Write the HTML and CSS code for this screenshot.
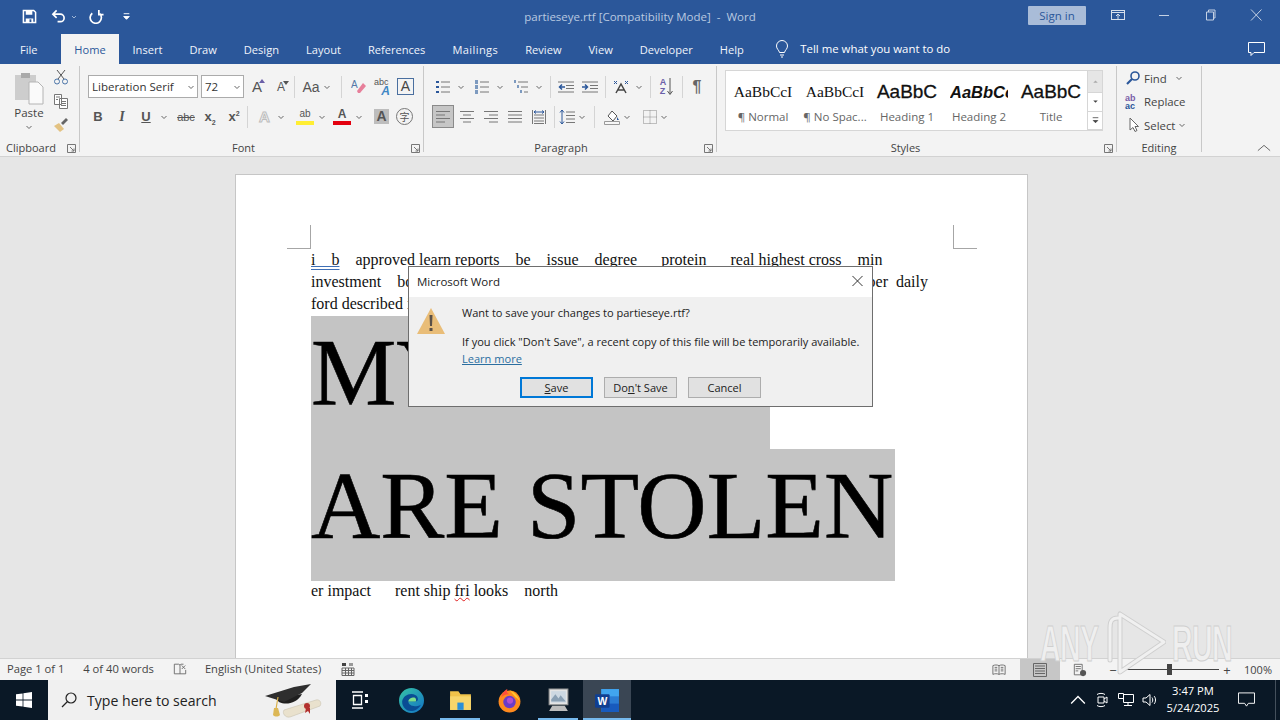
FILE: index.html
```html
<!DOCTYPE html>
<html lang="en">
<head>
<meta charset="utf-8">
<title>partieseye.rtf - Word</title>
<link rel="stylesheet" href="styles.css">
</head>
<body>
<svg class="defs" width="0" height="0">
  <symbol id="chev" viewBox="0 0 8 8"><path d="M1.500 3l2.500 2.500L6.500 3" fill="none" stroke="#666" stroke-width="1"/></symbol>
  <symbol id="launch" viewBox="0 0 9 9"><path d="M.5.500h8v8h-8zM3 3l4 4M7 4.500V7H4.500" fill="none" stroke="#777"/></symbol>
  <symbol id="al-l" viewBox="0 0 16 16"><path d="M1 2.500h14M1 6h9M1 9.500h14M1 13h9" fill="none" stroke="#777"/></symbol>
  <symbol id="al-c" viewBox="0 0 16 16"><path d="M1 2.500h14M4 6h8M1 9.500h14M4 13h8" fill="none" stroke="#777"/></symbol>
  <symbol id="al-r" viewBox="0 0 16 16"><path d="M1 2.500h14M6 6h9M1 9.500h14M6 13h9" fill="none" stroke="#777"/></symbol>
  <symbol id="al-j" viewBox="0 0 16 16"><path d="M1 2.500h14M1 6h14M1 9.500h14M1 13h14" fill="none" stroke="#777"/></symbol>
</svg>

<div class="app">
  <header class="titlebar">
    <div class="qat">
      <svg class="q" viewBox="0 0 16 16"><path d="M1.500 1.500h11l2 2v11h-13z" fill="none" stroke="#fff" stroke-width="1.600"/><path d="M4 2h7v4H4zM4 10h8v4H4z" fill="#fff"/><path d="M8 11h2v3H8z" fill="#2b579a"/></svg>
      <svg class="q undo" viewBox="0 0 16 16"><path d="M6 1.500L2 5.500l4 4M2.500 5.500H10a4 4 0 0 1 0 8H7" fill="none" stroke="#fff" stroke-width="1.800"/></svg>
      <svg class="mini" viewBox="0 0 8 8"><path d="M2 3l2 2 2-2" fill="none" stroke="#9fb6d6"/></svg>
      <svg class="q redo" viewBox="0 0 16 16"><path d="M4 3.500a6 6 0 1 0 8 .5M11 0v5h5" fill="none" stroke="#fff" stroke-width="1.800" transform="translate(-.5 1)"/></svg>
      <svg class="q more" viewBox="0 0 16 16"><path d="M5 5h6M5 8h6l-3 3z" fill="#fff" stroke="#fff"/></svg>
    </div>
    <div class="doc-title">partieseye.rtf [Compatibility Mode]&nbsp; -&nbsp; Word</div>
    <div class="winctl">
      <button class="signin">Sign in</button>
      <svg class="w opts" viewBox="0 0 14 12"><rect x=".5" y="1.500" width="13" height="9" fill="none" stroke="#d5dfec"/><path d="M.5 3.500h13M7 10V5M5 7l2-2 2 2" fill="none" stroke="#d5dfec"/></svg>
      <svg class="w" viewBox="0 0 14 12"><path d="M2 6.500h10" stroke="#c4d1e4"/></svg>
      <svg class="w" viewBox="0 0 14 12"><path d="M3.500 3h7v8h-7zM5.500 3V1h6.500v8h-1.500" fill="none" stroke="#c4d1e4"/></svg>
      <svg class="w" viewBox="0 0 14 12"><path d="M2 .5l10.500 11M12.500.5L2 11.500" fill="none" stroke="#c4d1e4"/></svg>
    </div>
  </header>

  <nav class="tabs">
    <span class="tab file">File</span>
    <span class="tab active">Home</span>
    <span class="tab">Insert</span>
    <span class="tab">Draw</span>
    <span class="tab">Design</span>
    <span class="tab">Layout</span>
    <span class="tab">References</span>
    <span class="tab mail">Mailings</span>
    <span class="tab">Review</span>
    <span class="tab">View</span>
    <span class="tab">Developer</span>
    <span class="tab">Help</span>
    <svg class="bulb" viewBox="0 0 14 18"><path d="M4.500 12.500C4 10 1.500 9 1.500 6a5.500 5.500 0 0 1 11 0c0 3-2.500 4-3 6.500zM5 15h4M6 17h2" fill="none" stroke="#fff"/></svg>
    <span class="tellme">Tell me what you want to do</span>
    <svg class="comment" viewBox="0 0 18 16"><path d="M.5 1.500h16v10H6l-3 3v-3H.5z" fill="none" stroke="#fff"/></svg>
  </nav>

  <section class="ribbon">
    <div class="group g-clip">
      <div class="g-body clip">
        <div class="paste">
          <svg class="paste-i" viewBox="0 0 30 34"><path d="M1 4h21v25H1z" fill="#cdcdcd"/><path d="M7 2h9v5H7z" fill="#aaa"/><path d="M15 11h9l5 5v17H15z" fill="#fafafa" stroke="#b4b4b4"/></svg>
          <span class="paste-t">Paste</span>
          <svg class="ch" ><use href="#chev"/></svg>
        </div>
        <div class="clip-tools">
          <svg class="ic" viewBox="0 0 16 16"><path d="M4 1l7 9M12 1l-7 9" stroke="#555" fill="none"/><circle cx="4" cy="12.500" r="2.500" fill="none" stroke="#4a74a8"/><circle cx="12" cy="12.500" r="2.500" fill="none" stroke="#4a74a8"/></svg>
          <svg class="ic" viewBox="0 0 16 16"><path d="M1.500 1.500h7v10h-7zM6.500 5.500h8v10h-8zM3 4h4M3 6.500h2M8 8.500h5M8 10.500h5M8 12.500h5" fill="#fff" stroke="#777"/></svg>
          <svg class="ic" viewBox="0 0 16 16"><path d="M1 9l5-3 5 6-4 3z" fill="#e3c282"/><path d="M8 6l5-5 2 2-5 5z" fill="#666"/></svg>
        </div>
      </div>
      <div class="g-label"><span>Clipboard</span><svg class="launch"><use href="#launch"/></svg></div>
    </div>

    <div class="group g-font">
      <div class="g-body stack">
        <div class="row r1">
          <div class="combo font-name"><span>Liberation Serif</span><svg class="ch"><use href="#chev"/></svg></div>
          <div class="combo font-size"><span>72</span><svg class="ch"><use href="#chev"/></svg></div>
          <span class="gl big up">A</span>
          <span class="gl small-a down">A</span>
          <i class="sep"></i>
          <span class="gl aa">Aa</span><svg class="ch"><use href="#chev"/></svg>
          <i class="sep s2"></i>
          <svg class="ic" viewBox="0 0 16 16"><path d="M6 12l6-8 3 3-6 7H7z" fill="#e77f9a"/><text x="0" y="9" font-size="10" fill="#5579a8" font-family="Liberation Sans">A</text></svg>
          <span class="abc"><small>abc</small><b>A</b></span>
          <span class="boxa">A</span>
        </div>
        <div class="row r2">
          <span class="fmt b">B</span>
          <span class="fmt it">I</span>
          <span class="fmt u">U</span><svg class="ch"><use href="#chev"/></svg>
          <span class="fmt strike">abc</span>
          <span class="fmt sub">x<sub>2</sub></span>
          <span class="fmt sup">x<sup>2</sup></span>
          <i class="sep s3"></i>
          <span class="glow">A</span><svg class="ch"><use href="#chev"/></svg>
          <span class="hl">ab</span><svg class="ch"><use href="#chev"/></svg>
          <span class="fc">A</span><svg class="ch"><use href="#chev"/></svg>
          <span class="shade">A</span>
          <span class="enc">字</span>
        </div>
      </div>
      <div class="g-label center"><span>Font</span><svg class="launch"><use href="#launch"/></svg></div>
    </div>

    <div class="group g-para">
      <div class="g-body stack">
        <div class="row p1">
          <svg class="ic" viewBox="0 0 16 16"><path d="M6 3h9M6 8h9M6 13h9" stroke="#777"/><path d="M1 2h3v2H1zM1 7h3v2H1zM1 12h3v2H1z" fill="#2b579a"/></svg><svg class="ch"><use href="#chev"/></svg>
          <svg class="ic" viewBox="0 0 16 16"><path d="M6 3h9M6 8h9M6 13h9" stroke="#777"/><path d="M1 1h3v4H1zM1 6h3v4H1zM1 11h3v4H1z" fill="#4a74a8" opacity=".7"/></svg><svg class="ch"><use href="#chev"/></svg>
          <svg class="ic" viewBox="0 0 16 16"><path d="M5 3h10M8 8h7M11 13h4" stroke="#777"/><path d="M1 1h2v3H1zM4 6h2v3H4zM7 11h2v3H7z" fill="#4a74a8" opacity=".7"/></svg><svg class="ch"><use href="#chev"/></svg>
          <i class="sep sa"></i>
          <svg class="ic" viewBox="0 0 16 16"><path d="M0 3h16M8 6.500h8M8 9.500h8M0 13h16" stroke="#777"/><path d="M7 8H2M4 5.500L1.500 8 4 10.500" fill="none" stroke="#2b579a" stroke-width="1.500"/></svg>
          <svg class="ic" viewBox="0 0 16 16"><path d="M0 3h16M8 6.500h8M8 9.500h8M0 13h16" stroke="#777"/><path d="M0 8h5M3 5.500L5.500 8 3 10.500" fill="none" stroke="#2b579a" stroke-width="1.500"/></svg>
          <i class="sep sc"></i>
          <svg class="ic" viewBox="0 0 16 16"><path d="M3 14L8 5l5 9M5 11h6" fill="none" stroke="#444" stroke-width="1.500"/><path d="M1 5l3-3M1 2l3 3M12 2l3 3M15 2l-3 3" stroke="#2b579a"/></svg><svg class="ch"><use href="#chev"/></svg>
          <i class="sep sa"></i>
          <span class="sort"><span>A<br>Z</span><svg viewBox="0 0 6 18"><path d="M3 0v16M.5 13L3 16.500 5.500 13" fill="none" stroke="#555"/></svg></span>
          <i class="sep sc"></i>
          <span class="pil">¶</span>
        </div>
        <div class="row p2">
          <span class="al on"><svg class="ic"><use href="#al-l"/></svg></span>
          <span class="al"><svg class="ic"><use href="#al-c"/></svg></span>
          <span class="al"><svg class="ic"><use href="#al-r"/></svg></span>
          <span class="al"><svg class="ic"><use href="#al-j"/></svg></span>
          <span class="al"><svg class="ic" viewBox="0 0 16 16"><path d="M1.500 1v14M14.500 1v14M3 6h10M3 9h10M3 12h10M3 14.500h10" fill="none" stroke="#777"/><path d="M3 3h10M5 1.500L3 3l2 1.500M11 1.500L13 3l-2 1.500" fill="none" stroke="#2b579a"/></svg></span>
          <i class="sep"></i>
          <svg class="ic ls" viewBox="0 0 16 16"><path d="M7 3h9M7 6.500h9M7 10h9M7 13.500h9" stroke="#777"/><path d="M3 1v14M1 3.500L3 1l2 2.500M1 12.500L3 15l2-2.500" fill="none" stroke="#2b579a"/></svg><svg class="ch"><use href="#chev"/></svg>
          <i class="sep wide"></i>
          <svg class="ic" viewBox="0 0 16 16"><path d="M4 7l4-5 5 5-4 5z" fill="#fff" stroke="#555"/><path d="M13 8l2 3-2 0z" fill="#2b579a"/><path d="M.5 12.500h15v3H.5z" fill="#f7f7f7" stroke="#999"/></svg><svg class="ch"><use href="#chev"/></svg>
          <svg class="ic bd" viewBox="0 0 14 14"><path d="M.5.500h13v13H.5zM7 .5v13M.5 7h13" fill="none" stroke="#888" stroke-dasharray="1 1"/></svg><svg class="ch"><use href="#chev"/></svg>
        </div>
      </div>
      <div class="g-label center"><span>Paragraph</span><svg class="launch"><use href="#launch"/></svg></div>
    </div>

    <div class="group g-styles">
      <div class="g-body gallery-wrap">
        <div class="gallery">
          <div class="style"><span class="s-prev serif">AaBbCcI</span><span class="s-name">¶ Normal</span></div>
          <div class="style"><span class="s-prev serif">AaBbCcI</span><span class="s-name">¶ No Spac...</span></div>
          <div class="style"><span class="s-prev h1">AaBbC</span><span class="s-name">Heading 1</span></div>
          <div class="style"><span class="s-prev h2">AaBbCc</span><span class="s-name">Heading 2</span></div>
          <div class="style"><span class="s-prev h1">AaBbC</span><span class="s-name">Title</span></div>
          <div class="scroller">
            <span class="sb dis"><svg viewBox="0 0 8 8"><path d="M2 5l2-2 2 2z" fill="#aaa"/></svg></span>
            <span class="sb"><svg viewBox="0 0 8 8"><path d="M2 3l2 2 2-2z" fill="#444"/></svg></span>
            <span class="sb"><svg viewBox="0 0 8 8"><path d="M1.500 1.500h5M2 4l2 2 2-2z" fill="#444" stroke="#444" stroke-width=".7"/></svg></span>
          </div>
        </div>
      </div>
      <div class="g-label center"><span>Styles</span><svg class="launch"><use href="#launch"/></svg></div>
    </div>

    <div class="group g-edit">
      <div class="g-body edit">
        <div class="erow"><svg class="ic" viewBox="0 0 16 16"><circle cx="10" cy="6" r="4" fill="none" stroke="#2b579a" stroke-width="1.600"/><path d="M7 9l-5 5" stroke="#2b579a" stroke-width="2.200"/></svg><span>Find</span><svg class="ch gapc"><use href="#chev"/></svg></div>
        <div class="erow"><span class="rep"><b>ab</b><b>ac</b></span><span>Replace</span></div>
        <div class="erow"><svg class="ic" viewBox="0 0 16 16"><path d="M5 1v12l3-2.500 2 4 2-1-2-4h3.500z" fill="#fff" stroke="#666"/></svg><span>Select</span><svg class="ch"><use href="#chev"/></svg></div>
      </div>
      <div class="g-label ed"><span>Editing</span></div>
    </div>
    <div class="collapse"><svg viewBox="0 0 16 8"><path d="M1 7l7-6 7 6" fill="none" stroke="#555"/></svg></div>
  </section>

  <main class="docarea">
    <article class="page">
      <div class="marks"><i class="mark ml"></i><i class="mark mr"></i></div>
      <div class="body-text">
        <p class="ln"><span class="dbl">i&nbsp;&nbsp;&nbsp;&nbsp;b</span>    approved learn reports    be    issue    degree      protein      real highest cross    min</p>
        <p class="ln ln2"><span>investment    book</span><span>number  daily</span></p>
        <p class="ln">ford described its</p>
        <p class="huge first">MY FILES </p>
        <p class="huge second">ARE STOLEN</p>
        <p class="ln last">er impact      rent ship <span class="sq">fri</span> looks    north</p>
      </div>
    </article>
  </main>

  <footer class="status">
    <span class="st page-n">Page 1 of 1</span>
    <span class="st words">4 of 40 words</span>
    <svg class="sti book" viewBox="0 0 16 16"><path d="M1.500 2.500h5l1.500 1v10H1.500zM8 3.500l1-1h3M8 13.500h6.500V9M10 4l4 4M14 4l-4 4" fill="none" stroke="#666"/></svg>
    <span class="st lang">English (United States)</span>
    <svg class="sti macro" viewBox="0 0 14 14"><path d="M1 6h12v7.500H1zM1 8.500h12M1 11h12M4.500 6v8M7.500 6v8M10.500 6v8" fill="none" stroke="#666"/><path d="M1 1h4v3H1z" fill="#444"/><path d="M8 1h4v3H8z" fill="#999"/></svg>
    <span class="status-right">
      <svg class="sti" viewBox="0 0 16 14"><path d="M8 2C6 1 3 1 1 2v10c2-1 5-1 7 0 2-1 5-1 7 0V2C13 1 10 1 8 2zM8 2v10M3 4h3M3 6h3M3 8h3M10 4h3M10 6h3M10 8h3" fill="none" stroke="#666"/></svg>
      <span class="view-on"><svg class="sti" viewBox="0 0 14 14"><path d="M.5.500h13v13H.5zM2 3h10M2 5.500h10M2 8h10M2 10.500h10" fill="none" stroke="#666"/></svg></span>
      <svg class="sti web" viewBox="0 0 16 16"><path d="M1.500 1.500h9v12h-9zM3 4h6M3 6.500h6M3 9h3" fill="none" stroke="#666"/><circle cx="11.500" cy="11.500" r="3.500" fill="#555"/></svg>
      <span class="zoom-m">−</span>
      <span class="slider"><i class="thumb"></i></span>
      <span class="zoom-p">+</span>
      <span class="st pct">100%</span>
    </span>
  </footer>

  <div class="taskbar">
    <span class="start"><svg viewBox="0 0 16 16"><path d="M0 2.300l6.600-.9v6.200H0zM7.400 1.300L16 0v7.600H7.400zM0 8.400h6.600v6.200L0 13.700zM7.400 8.400H16V16l-8.600-1.300z" fill="#fff"/></svg></span>
    <div class="search">
      <svg class="mag" viewBox="0 0 16 16"><circle cx="10" cy="6" r="5" fill="none" stroke="#222" stroke-width="1.200"/><path d="M6.500 9.500L1 15" stroke="#222" stroke-width="1.200"/></svg>
      <span class="s-text">Type here to search</span>
      <svg class="cap" viewBox="0 0 58 36"><path d="M20 28L52 18c4-1 6 3 4 6L26 35c-5 1-8-4-6-7z" fill="#e9e1cd" stroke="#c9c2b0" stroke-width=".6"/><path d="M12 16c2 8 20 8 26-4z" fill="#1f1f1f"/><path d="M1 14L30 5 47 2 38 11 20 20z" fill="#2e2e2e"/><path d="M14 15l-2 12" stroke="#d9b04a" stroke-width="1.200"/><path d="M10 26h4l2 7c-2 2-5 2-7 0z" fill="#dcb755"/><circle cx="43" cy="24" r="3" fill="#b3302e"/><path d="M42 26l-1 5 3-2 2 3v-6z" fill="#b3302e"/></svg>
    </div>
    <span class="tb tv-b"><svg class="tv" viewBox="0 0 18 18"><path d="M1 1h11M1 17h11M2.500 4.500h8v9h-8z" fill="none" stroke="#fff" stroke-width="1.300"/><path d="M14 3h3v3h-3zM14 9h3v3h-3z" fill="#fff"/></svg></span>
    <span class="tb edge"><svg class="app-i" viewBox="0 0 24 24"><defs><linearGradient id="eg" x1="0" y1="0" x2="1" y2="1"><stop offset="0" stop-color="#36c4a6"/><stop offset="1" stop-color="#1272c6"/></linearGradient></defs><circle cx="12" cy="12" r="12" fill="url(#eg)"/><path d="M3 13c1-6 8-9 13-6 3 2 3 6 0 6H9c0 4 6 6 12 3-3 6-11 8-15 4-2-2-3-4-3-7z" fill="#0a4d94"/><path d="M9 13c0-3 3-4 5-4s3 2 2 4z" fill="#7ee08a"/></svg></span>
    <span class="tb run"><svg class="app-i" viewBox="0 0 24 24"><path d="M2 3h8l2 3h10v15H2z" fill="#f0c24a"/><path d="M2 8h20v13H2z" fill="#f7d56b"/><path d="M9 14h6v7H9z" fill="#2a8fd8"/></svg></span>
    <span class="tb"><svg class="app-i" viewBox="0 0 24 24"><circle cx="12" cy="13" r="10.500" fill="#ff8a1e"/><path d="M12 2c3 2 8 4 10 11-2-3-3-4-4-4z" fill="#ffcb2e"/><path d="M4 9c1-3 2-6 6-8-1 3 0 4 2 5-4 0-6 1-8 3z" fill="#ff4f3a"/><circle cx="12" cy="13.500" r="6" fill="#6a3bc9"/><circle cx="12.500" cy="12" r="3" fill="#b04ed0"/></svg></span>
    <span class="tb run"><svg class="app-i" viewBox="0 0 24 24"><path d="M3 1h18v15H3z" fill="#e4e4e4" stroke="#999"/><path d="M5 3h14v11H5z" fill="#cdd8e2"/><path d="M5 11l4-5 3 4 2-3 5 6H5z" fill="#8aa0b4"/><path d="M6 17h12l3 5H3z" fill="#bdbdbd"/></svg></span>
    <span class="tb active-app"><svg class="app-i" viewBox="0 0 24 24"><path d="M6 1h17v22H6z" fill="#2b7cd3"/><path d="M6 1h17v7H6z" fill="#41a5ee"/><path d="M6 15h17v8H6z" fill="#185abd"/><rect x="0" y="6" width="14" height="13" rx="1" fill="#103f91"/><text x="7" y="16.500" text-anchor="middle" class="wl">W</text></svg></span>
    <div class="tray">
      <svg class="tr" viewBox="0 0 14 14"><path d="M1 10l6-6 6 6" fill="none" stroke="#fff" stroke-width="1.200"/></svg>
      <svg class="tr" viewBox="0 0 14 16"><path d="M3 5h6v6H3zM9 7l3-2v6l-3-2M2 2.500c2-1.500 6-1.500 8 0M2 13.500c2 1.500 6 1.500 8 0" fill="none" stroke="#fff"/></svg>
      <svg class="tr" viewBox="0 0 16 14"><path d="M5.500 1.500h10v8h-10zM.5.500h5v5h-5zM10 9.500v3M6 12.500h8" fill="none" stroke="#fff"/></svg>
      <svg class="tr" viewBox="0 0 16 14"><path d="M1 5h3l4-3.500v11L4 9H1zM10 4.500c1 1.500 1 3.500 0 5M12 3c2 2 2 6 0 8" fill="none" stroke="#fff"/></svg>
      <div class="clock"><span>3:47 PM</span><span>5/24/2025</span></div>
      <svg class="note" viewBox="0 0 18 16"><path d="M.5.500h17v11H11l-2 3-2-3H.5z" fill="none" stroke="#fff"/></svg>
      <i class="desk"></i>
    </div>
  </div>

  <div class="wm" aria-hidden="true">
    <span class="wm-t">ANY</span>
    <svg class="wm-i" viewBox="0 0 60 68"><g fill="none" stroke-linejoin="round" stroke-linecap="round"><path class="wm-o" d="M12 10C5 10 4 14 4 20v32M14 6v58l44-30z"/><path class="wm-f" d="M12 10C5 10 4 14 4 20v32M14 6v58l44-30z"/></g></svg>
    <span class="wm-t">RUN</span>
  </div>

  <div class="dialog" role="dialog">
    <div class="d-title"><span>Microsoft Word</span><svg class="d-x" viewBox="0 0 12 12"><path d="M.5.500l11 11M11.500.5l-11 11" stroke="#222" fill="none"/></svg></div>
    <div class="d-body">
      <div class="d-main">
        <svg class="warn" viewBox="0 0 28 26"><path d="M14 0l14 26H0z" fill="#e9bd78"/><path d="M12.500 7h3l-.5 11h-2zM12.500 20h3v3h-3z" fill="#5a5048"/></svg>
        <div class="d-text">
          <p class="d-q">Want to save your changes to partieseye.rtf?</p>
          <p class="d-info">If you click "Don't Save", a recent copy of this file will be temporarily available.</p>
          <a class="d-link">Learn more</a>
        </div>
      </div>
      <div class="d-btns">
        <button class="btn def"><u>S</u>ave</button>
        <button class="btn">Do<u>n</u>'t Save</button>
        <button class="btn">Cancel</button>
      </div>
    </div>
  </div>
</div>
</body>
</html>
```
FILE: styles.css
```css
* { box-sizing: border-box; }
html, body { margin: 0; padding: 0; }
body { width: 1280px; height: 720px; overflow: hidden; font-family: "Open Sans", "Noto Sans", sans-serif; font-size: 11.5px; color: #444; }
.defs { position: absolute; }
p { margin: 0; }
svg { display: block; flex: none; }
.app { position: relative; width: 1280px; height: 720px; display: flex; flex-direction: column; }

/* title */
.titlebar { height: 34px; background: #2b579a; display: grid; grid-template-columns: 1fr auto 1fr; align-items: start; color: #b9c9e0; }
.qat { display: flex; align-items: center; padding: 9px 0 0 22px; }
.q { width: 15px; height: 15px; }
.undo { margin-left: 14px; }
.mini { width: 8px; height: 8px; margin-left: 4px; }
.redo { margin-left: 11px; }
.more { margin-left: 15px; }
.doc-title { font-size: 11.5px; padding-top: 9px; white-space: nowrap; }
.winctl { display: flex; align-items: flex-start; justify-content: flex-end; padding-top: 6px; }
.signin { width: 58px; height: 19px; border: 0; padding: 0; background: #a9bcd8; color: #2b579a; font: inherit; font-size: 11.5px; line-height: 19px; border-radius: 1px; }
.w { width: 14px; height: 12px; margin: 3px 0 0 32px; }
.winctl .opts { margin-left: 25px; }
.winctl .w:last-child { margin-right: 17px; }

/* tabs */
.tabs { height: 30px; background: #2b579a; display: flex; align-items: stretch; color: #fff; font-size: 11.1px; position: relative; }
.tab { display: flex; align-items: center; padding: 0 13.500px; white-space: nowrap; color: #f0f4fa; }
.tab.file { width: 61px; padding-left: 20px; }
.tab.active { background: #f3f3f3; color: #2b579a; width: 58px; padding: 0; justify-content: center; }
.tab.mail { letter-spacing: .4px; }
.bulb { width: 14px; height: 18px; margin: 6px 0 0 18px; }
.tellme { margin-left: 11px; padding-top: 7px; white-space: nowrap; font-size: 11.4px; }
.comment { width: 18px; height: 16px; margin: 7px 0 0 auto; position: absolute; right: 14px; }

/* ribbon */
.ribbon { height: 93px; background: #f3f3f3; border-bottom: 1px solid #d2d2d2; display: flex; position: relative; }
.group { display: flex; flex-direction: column; height: 86px; margin-top: 2px; border-right: 1px solid #c8c8c8; }
.g-body { height: 73px; flex: none; }
.g-label { display: flex; align-items: center; height: 17px; flex: none; position: relative; font-size: 11px; color: #444; }
.g-label.center { justify-content: center; }
.launch { width: 9px; height: 9px; position: absolute; right: 3px; top: 5px; }
.g-clip { width: 80px; }
.g-font { width: 344px; }
.g-font .g-label { padding-right: 16px; }
.g-para { width: 293px; }
.g-para .g-label { padding-right: 18px; }
.g-styles { width: 400px; }
.g-styles .g-label { padding-right: 22px; }
.g-edit { width: 85px; }
.ch { width: 8px; height: 8px; }
.ic { width: 16px; height: 16px; }
.sep { width: 1px; height: 22px; background: #d4d4d4; flex: none; }

/* clipboard */
.clip { display: flex; padding: 5px 0 0 14px; }
.paste { width: 30px; display: flex; flex-direction: column; align-items: center; }
.paste-i { width: 30px; height: 34px; }
.paste-t { font-size: 11.500px; line-height: 16px; }
.paste .ch { margin-top: 2px; }
.clip-tools { display: flex; flex-direction: column; gap: 8px; margin: -2px 0 0 9px; }
.g-clip .g-label { padding-left: 6px; }

/* rows */
.stack { display: flex; flex-direction: column; gap: 7px; padding-top: 9px; }
.row { display: flex; align-items: center; height: 23px; }
.g-font .row { padding-left: 8px; }
.combo { display: flex; align-items: center; justify-content: space-between; height: 23px; background: #fff; border: 1px solid #ababab; padding: 0 2px 0 3px; font-size: 11.500px; color: #333; }
.font-name { width: 110px; margin-right: 3px; }
.font-size { width: 43px; }
.gl { color: #555; font-family: "Liberation Sans", sans-serif; display: block; text-align: center; position: relative; }
.big { font-size: 15px; width: 16px; margin-left: 5px; }
.small-a { font-size: 12px; margin-left: 8px; width: 16px; }
.up::after, .down::after { content: ""; position: absolute; right: 0; top: 1px; border: 3px solid transparent; border-top-width: 0; border-bottom: 4px solid #6a5fa8; }
.down::after { border-bottom: 0; border-top: 4px solid #555; }
.r1 .sep { margin-left: 5px; }
.aa { font-size: 14px; margin-left: 5px; width: 22px; }
.r1 .aa + .ch { margin-left: 1px; }
.r1 .s2 { margin-left: 10px; margin-right: 9px; }
.abc { width: 16px; height: 18px; margin-left: 7px; position: relative; font-family: "Liberation Sans", sans-serif; }
.abc small { font-size: 9px; position: absolute; left: 0; top: -1px; color: #555; }
.abc b { position: absolute; right: 0; bottom: -2px; font-size: 12px; font-style: italic; color: #3f87c5; }
.boxa { width: 17px; height: 17px; margin-left: 7px; border: 1px solid #4a6f9f; text-align: center; font: 14px/15px "Liberation Sans", sans-serif; color: #444; }
.fmt { font-family: "Liberation Sans", sans-serif; font-size: 13px; color: #555; width: 24px; text-align: center; font-weight: bold; }
.r2 { padding-left: 2px; }
.b { margin-left: -2px; }
.it { font-family: "Liberation Serif", serif; font-style: italic; font-size: 14px; }
.u { text-decoration: underline; }
.u + .ch { margin-left: 2px; }
.strike { font-weight: normal; font-size: 11px; text-decoration: line-through; margin-left: 6px; }
.sub, .sup { font-size: 13px; }
.fmt sub, .fmt sup { font-size: 7px; line-height: 0; }
.s3 { margin: 0 8px 0 1px; }
.glow { width: 17px; text-align: center; font: bold 15px "Liberation Sans", sans-serif; color: #f8f8f8; -webkit-text-stroke: 1px #bdbdbd; margin-right: 4px; }
.hl { width: 18px; margin-left: 11px; margin-right: 4px; text-align: center; font: 10px/12px "Liberation Sans", sans-serif; border-bottom: 4px solid #ffee33; color: #555; height: 17px; }
.fc { width: 18px; margin-left: 7px; margin-right: 4px; text-align: center; font: bold 12px/13px "Liberation Sans", sans-serif; color: #555; border-bottom: 4px solid #e3000f; height: 17px; }
.shade { width: 15px; height: 15px; margin-left: 11px; background: #bdbdbd; text-align: center; font: bold 14px/15px "Liberation Sans", sans-serif; color: #555; }
.enc { width: 17px; height: 17px; margin-left: 7px; border: 1px solid #777; border-radius: 50%; text-align: center; font: 10px/15px "Noto Sans CJK SC", sans-serif; color: #555; }

/* paragraph */
.g-para .row { padding-left: 11px; }
.p1 .ch { margin-left: 6px; margin-right: 9px; }
.p1 .sa { margin: 0 7px 0 -2px; }
.p1 .sc { margin: 0 7px; }
.p1 .ic + .ic { margin-left: 8px; }
.sort { display: flex; width: 17px; justify-content: center; font: bold 9px/9px "Liberation Sans", sans-serif; color: #6a5fa8; gap: 1px; }
.sort svg { width: 6px; height: 18px; }
.pil { width: 14px; font: bold 16px "Liberation Sans", sans-serif; color: #666; text-align: center; }
.g-para .p2 { padding-left: 8px; }
.al { width: 24px; height: 23px; display: flex; align-items: center; justify-content: center; }
.al.on { width: 22px; background: #c6c6c6; border: 1px solid #8a8a8a; margin-right: 1px; }
.p2 .sep { margin: 0 4px 0 3px; }
.p2 .sep.wide { margin-right: 9px; }
.p2 .ch { margin-left: 3px; margin-right: 5px; }
.bd { width: 14px; height: 14px; margin-left: 7px; }

/* styles */
.gallery-wrap { padding: 4px 0 0 8px; }
.gallery { display: flex; width: 378px; height: 61px; background: #fff; border: 1px solid #d6d6d6; padding-left: 1px; }
.style { width: 72px; display: flex; flex-direction: column; align-items: center; overflow: hidden; }
.s-prev { height: 38px; line-height: 42px; white-space: nowrap; color: #111; flex: none; }
.serif { font: 15.500px/42px "Liberation Serif", serif; }
.h1 { font: 19px/42px "Liberation Sans", sans-serif; -webkit-text-stroke: .3px #111; }
.h2 { font: italic bold 16.500px/42px "Liberation Sans", sans-serif; width: 58px; overflow: hidden; }
.s-name { font-size: 11.500px; color: #666; line-height: 16px; white-space: nowrap; }
.scroller { width: 15px; margin-left: auto; display: flex; flex-direction: column; border-left: 1px solid #d6d6d6; }
.sb { flex: 1; border-bottom: 1px solid #d6d6d6; display: flex; align-items: center; justify-content: center; }
.sb svg { width: 9px; height: 9px; }
.sb.dis { background: #e6e6e6; flex: 1.200; }

/* editing */
.edit { display: flex; flex-direction: column; padding: 3px 0 0 8px; gap: 5.500px; }
.erow { display: flex; align-items: center; height: 18px; gap: 3px; font-size: 11.400px; color: #444; }
.gapc { margin-left: 5px; }
.rep { width: 16px; display: flex; flex-direction: column; font: bold 9px/8px "Liberation Sans", sans-serif; color: #2b579a; }
.rep b:first-child { color: #7a5ea8; }
.ed { justify-content: center; }
.collapse { position: absolute; right: 9px; bottom: 4px; }
.collapse svg { width: 14px; height: 8px; }

/* document */
.docarea { flex: 1; min-height: 0; background: #e6e6e6; padding: 17px 0 0 235px; overflow: hidden; }
.page { width: 793px; height: 100%; background: #fff; border: 1px solid #c6c6c6; border-bottom: 0; padding: 50px 50px 0 51px; }
.marks { display: flex; justify-content: space-between; height: 24px; }
.mark { width: 24px; height: 24px; border-bottom: 1px solid #a6a6a6; }
.ml { border-right: 1px solid #a6a6a6; }
.mr { border-left: 1px solid #a6a6a6; }
.body-text { padding: 0 0 0 24px; font-family: "Liberation Serif", serif; color: #000; font-size: 16px; }
.ln { height: 22px; line-height: 22px; white-space: pre; color: #111; }
.ln2 { display: flex; justify-content: space-between; width: 617px; }
.huge { width: fit-content; white-space: pre; background: #c4c4c4; font-size: 96px; line-height: 114px; padding-bottom: 18px; color: #000; -webkit-text-stroke: .6px #000; }
.first { margin-top: 1px; padding-bottom: 19px; padding-right: 4px; }
.second { padding-right: 2px; }
.last { margin-top: -1px; }
.dbl { text-decoration: underline double #3f6fb5; }
.sq { text-decoration: underline wavy #e02020; text-decoration-thickness: 1px; }

/* watermark */
.wm { position: absolute; left: 1040px; top: 608px; width: 192px; height: 68px; display: flex; align-items: center; justify-content: space-between; pointer-events: none; }
.wm-t { font: bold 50px/1 "Liberation Sans", sans-serif; color: #efefef; -webkit-text-stroke: 1px #cfcfcf; width: 60px; flex: none; letter-spacing: -1px; transform: scaleX(.57); transform-origin: left center; margin-top: 4px; }
.wm-i { width: 60px; height: 68px; }
.wm-o { stroke: #cfcfcf; stroke-width: 5; }
.wm-f { stroke: #f0f0f0; stroke-width: 3; }

/* status */
.status { height: 22px; background: #f3f3f3; border-top: 1px solid #d2d2d2; display: flex; align-items: center; font-size: 11.200px; color: #444; padding-bottom: 2px; }
.st { white-space: nowrap; }
.page-n { margin-left: 7px; }
.words { margin-left: 19px; }
.sti { width: 14px; height: 14px; }
.book { margin-left: 19px; }
.lang { margin-left: 18px; }
.macro { margin-left: 20px; }
.status-right { display: flex; align-items: center; margin-left: auto; height: 21px; margin-bottom: -2px; }
.view-on { width: 40px; height: 21px; margin-left: 14px; background: #c6c6c6; display: flex; align-items: center; justify-content: center; }
.web { margin-left: 13px; }
.zoom-m, .zoom-p { font-size: 13px; width: 10px; text-align: center; color: #444; line-height: 14px; }
.zoom-m { margin-left: 21px; }
.slider { width: 101px; height: 1px; background: #444; margin: 0 3px 0 0; position: relative; }
.thumb { position: absolute; left: 49px; top: -5px; width: 5px; height: 11px; background: #444; }
.pct { margin-left: 12px; margin-right: 8px; font-size: 11px; }

/* taskbar */
.taskbar { height: 40px; background: #0a1826; display: flex; color: #fff; }
.start { width: 48px; display: flex; align-items: center; justify-content: center; }
.start svg { width: 16px; height: 16px; }
.search { width: 288px; background: #f0f0f0; display: flex; align-items: center; color: #222; position: relative; }
.mag { width: 16px; height: 16px; margin-left: 13px; }
.s-text { font-size: 14.100px; margin-left: 10px; white-space: nowrap; }
.cap { width: 58px; height: 36px; margin-left: auto; margin-right: 14px; }
.tb { width: 48px; height: 40px; display: flex; align-items: center; justify-content: center; margin-left: 1px; position: relative; }
.tv-b { margin-left: 0; }
.edge { margin-left: 3px; }
.tv { width: 18px; height: 18px; }
.app-i { width: 25px; height: 25px; }
.run::after, .active-app::after { content: ""; position: absolute; left: 4px; right: 4px; bottom: 0; height: 2px; background: #76b9ed; }
.active-app { background: #3a4654; }
.active-app::after { left: 0; right: 0; }
.wl { font: bold 10px "Liberation Sans", sans-serif; fill: #fff; }
.tray { margin-left: auto; display: flex; align-items: center; }
.tr { width: 16px; height: 16px; margin-right: 8px; }
.clock { width: 66px; margin-left: -6px; padding-bottom: 2px; display: flex; flex-direction: column; align-items: center; font-size: 11.200px; line-height: 17px; }
.note { width: 17px; height: 16px; margin: 0 20px 0 12px; }
.desk { width: 1px; height: 40px; background: #44505c; margin-right: 4px; }

/* dialog */
.dialog { position: absolute; left: 408px; top: 266px; width: 465px; height: 141px; background: #f0f0f0; border: 1px solid #6e6e6e; display: flex; flex-direction: column; color: #222; }
.d-title { height: 30px; background: #fff; display: flex; align-items: center; justify-content: space-between; padding: 0 9px 2px 8px; font-size: 11.500px; }
.d-x { width: 11px; height: 12px; }
.d-body { flex: 1; padding: 0 0 0 8px; font-size: 11.050px; }
.d-main { display: flex; height: 78px; }
.warn { width: 28px; height: 26px; margin-top: 11px; }
.d-text { margin-left: 17px; padding-top: 8px; }
.d-q { line-height: 16px; }
.d-info { margin-top: 13px; line-height: 16px; white-space: nowrap; }
.d-link { display: block; margin-top: 1px; line-height: 16px; color: #2b6ea0; text-decoration: underline; }
.d-btns { display: flex; gap: 11px; padding-left: 103px; margin-top: 2px; }
.btn { width: 73px; height: 21px; background: #e1e1e1; border: 1px solid #adadad; padding: 0; font: inherit; color: #222; }
.btn.def { border: 2px solid #0078d7; }
```
